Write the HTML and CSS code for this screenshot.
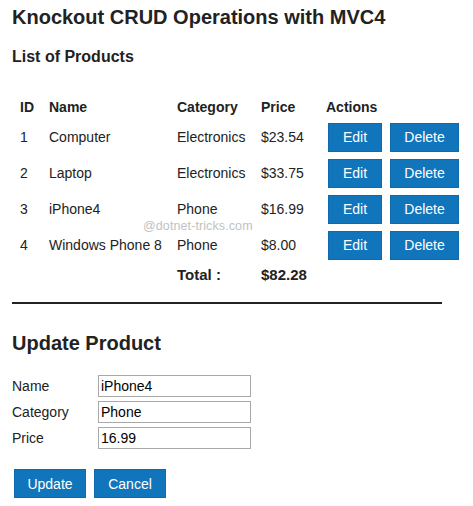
FILE: index.html
```html
<!DOCTYPE html>
<html>
<head>
<meta charset="utf-8">
<link rel="stylesheet" href="styles.css">
</head>
<body>
<h1 class="title">Knockout CRUD Operations with MVC4</h1>
<h2 class="subtitle">List of Products</h2>
<table class="products">
  <colgroup>
    <col class="c-id"><col class="c-name"><col class="c-cat"><col class="c-price"><col class="c-act">
  </colgroup>
  <thead>
    <tr class="head-row"><th>ID</th><th>Name</th><th>Category</th><th>Price</th><th>Actions</th></tr>
  </thead>
  <tbody>
    <tr class="row"><td>1</td><td>Computer</td><td>Electronics</td><td>$23.54</td><td><button class="btn btn-edit">Edit</button><button class="btn btn-del">Delete</button></td></tr>
    <tr class="row"><td>2</td><td>Laptop</td><td>Electronics</td><td>$33.75</td><td><button class="btn btn-edit">Edit</button><button class="btn btn-del">Delete</button></td></tr>
    <tr class="row"><td>3</td><td>iPhone4</td><td>Phone</td><td>$16.99</td><td><button class="btn btn-edit">Edit</button><button class="btn btn-del">Delete</button></td></tr>
    <tr class="row"><td>4</td><td>Windows Phone 8</td><td>Phone</td><td>$8.00</td><td><button class="btn btn-edit">Edit</button><button class="btn btn-del">Delete</button></td></tr>
    <tr class="total-row"><td></td><td></td><td class="strong">Total :</td><td class="strong">$82.28</td><td></td></tr>
  </tbody>
</table>
<div class="rule"></div>
<h2 class="section">Update Product</h2>
<div class="form">
  <label class="lbl">Name</label><input class="field" type="text" value="iPhone4">
  <label class="lbl">Category</label><input class="field" type="text" value="Phone">
  <label class="lbl">Price</label><input class="field" type="text" value="16.99">
</div>
<div class="actions">
  <button class="btn btn-form">Update</button>
  <button class="btn btn-form">Cancel</button>
</div>
<div class="watermark">@dotnet-tricks.com</div>
</body>
</html>
```
FILE: styles.css
```css
html, body { margin: 0; padding: 0; background: #fff; }
body {
  position: relative;
  padding: 0 12px;
  font-family: "Liberation Sans", Arial, sans-serif;
  color: #222;
  font-size: 14px;
}
.title {
  margin: 5px 0 0;
  font-size: 20px;
  line-height: 24px;
  font-weight: bold;
}
.subtitle {
  margin: 18px 0 0;
  font-size: 16px;
  line-height: 20px;
  font-weight: bold;
}
.products {
  width: 441px;
  margin: 28px 0 0 8px;
  border-collapse: collapse;
  border-spacing: 0;
  table-layout: fixed;
}
.c-id { width: 29px; }
.c-name { width: 128px; }
.c-cat { width: 84px; }
.c-price { width: 65px; }
.c-act { width: 135px; }
.products th, .products td {
  padding: 0;
  text-align: left;
  vertical-align: middle;
  white-space: nowrap;
}
.products th { font-weight: bold; }
.head-row { height: 24px; }
.row { height: 36px; }
.total-row { height: 22px; }
.strong { font-weight: bold; font-size: 15px; }
.btn {
  background: #1175bb;
  color: #fff;
  border: 1px solid #0f6aab;
  font-family: "Liberation Sans", Arial, sans-serif;
  font-size: 14px;
  height: 29px;
  padding: 0;
  display: inline-block;
  vertical-align: middle;
}
.btn-edit { width: 54px; margin-left: 2px; }
.btn-del { width: 69px; margin-left: 8px; }
.rule {
  margin-top: 17px;
  width: 430px;
  height: 2px;
  background: #222;
}
.section {
  margin: 27px 0 0;
  font-size: 20px;
  line-height: 24px;
  font-weight: bold;
}
.form {
  margin-top: 20px;
  display: grid;
  grid-template-columns: 86px 153px;
  row-gap: 4px;
  align-items: center;
}
.lbl { font-size: 14px; line-height: 22px; }
.field {
  box-sizing: border-box;
  width: 153px;
  height: 22px;
  margin: 0;
  border: 1px solid #a9a9a9;
  padding: 0 2px;
  font-family: "Liberation Sans", Arial, sans-serif;
  font-size: 14px;
  color: #000;
}
.actions {
  margin-top: 20px;
  display: flex;
  gap: 8px;
  padding-left: 2px;
}
.btn-form { width: 72px; }
.watermark {
  position: absolute;
  left: 143px;
  top: 219px;
  font-size: 12.5px;
  color: #c2c2c2;
  letter-spacing: 0.1px;
}
```
